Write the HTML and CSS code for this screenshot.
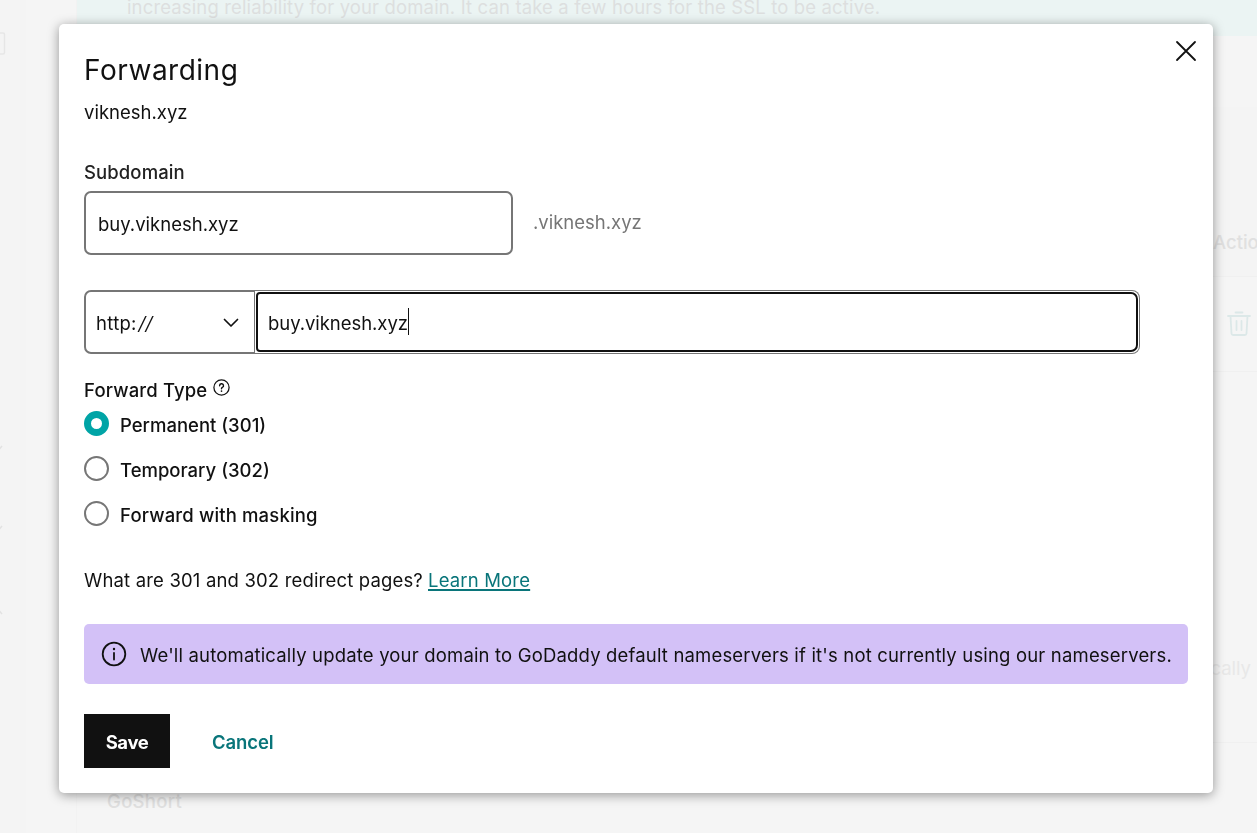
FILE: index.html
```
<!DOCTYPE html>
<html lang="en">
<head>
<meta charset="utf-8">
<title>Forwarding</title>
<link rel="stylesheet" href="styles.css">
</head>
<body>
<div class="page">
  <aside class="rail">
    <svg class="rail-art" width="6" height="833" viewBox="0 0 6 833" fill="none">
      <path d="M0 33H3Q4.500 33 4.500 34.500V52.500Q4.500 54 3 54H0" stroke="#e6e6e6" stroke-width="1.500"/>
      <path d="M-3 446l2.500 3 2.500-3M-3 526l2.500 3 2.500-3M-3 614l2.500-3 2.500 3" stroke="#e2e2e2" stroke-width="1.500"/>
    </svg>
  </aside>
  <main class="content">
    <div class="banner">increasing reliability for your domain. It can take a few hours for the SSL to be active.</div>
    <div class="table-head"><span class="head-label">Actions</span></div>
    <div class="record">
      <svg class="trash" width="24" height="26" viewBox="0 0 24 26" fill="none" stroke="#dce8e8" stroke-width="1.800" stroke-linecap="round" stroke-linejoin="round">
        <path d="M8.500 1.500h7M1 5h22M3.500 5l1 17.500q.100 1.500 1.700 1.500h11.600q1.600 0 1.700-1.500L20.500 5M9.500 10v9M14.500 10v9"/>
      </svg>
    </div>
    <div class="note"><span>automatically</span></div>
    <div class="short">GoShort</div>
  </main>
</div>

<div class="overlay">
  <section class="modal" role="dialog" aria-label="Forwarding">
    <button class="close" aria-label="Close">
      <svg width="22" height="22" viewBox="0 0 22 22" stroke="#111" stroke-width="1.800" stroke-linecap="round"><path d="M2 2l18 18M20 2L2 20"/></svg>
    </button>
    <h1 class="title">Forwarding</h1>
    <p class="domain">viknesh.xyz</p>
    <div class="label">Subdomain</div>
    <div class="sub-row">
      <div class="field">buy.viknesh.xyz</div>
      <span class="suffix">.viknesh.xyz</span>
    </div>
    <div class="url-row">
      <div class="scheme">
        <span>http:<span class="slashes">//</span></span>
        <svg width="16" height="10" viewBox="0 0 16 10" fill="none" stroke="#111" stroke-width="1.700" stroke-linecap="round" stroke-linejoin="round"><path d="M1.500 1.500L8 8l6.500-6.500"/></svg>
      </div>
      <div class="url"><div class="url-focus"><span class="url-text">buy.viknesh.xyz</span><i class="caret"></i></div></div>
    </div>
    <div class="type-label">
      <span class="type-text">Forward Type</span>
      <svg width="17" height="17" viewBox="0 0 17 17" fill="none" stroke="#111" stroke-width="1.250" stroke-linecap="round"><circle cx="8.500" cy="8.500" r="7.600"/><path d="M6.600 6.700a1.950 1.950 0 1 1 2.800 1.700q-.900.500-.900 1.300" stroke-width="1.400"/><path d="M8.500 12v.100" stroke-width="1.700"/></svg>
    </div>
    <div class="radios">
      <div class="radio"><i class="dot on"></i><span>Permanent (301)</span></div>
      <div class="radio"><i class="dot"></i><span>Temporary (302)</span></div>
      <div class="radio"><i class="dot"></i><span class="masking">Forward with masking</span></div>
    </div>
    <p class="help"><span>What are 301 and 302 redirect pages?</span><a class="learn">Learn More</a></p>
    <div class="alert">
      <svg width="26" height="26" viewBox="0 0 26 26" fill="none" stroke="#111" stroke-width="1.800" stroke-linecap="round"><circle cx="13" cy="13" r="11.300"/><path d="M13 12v6.500"/><path d="M13 8v.100" stroke-width="2.400"/></svg>
      <span class="alert-text">We'll automatically update your domain to GoDaddy default nameservers if it's not currently using our nameservers.</span>
    </div>
    <div class="actions">
      <button class="save">Save</button>
      <button class="cancel">Cancel</button>
    </div>
  </section>
</div>
</body>
</html>
```
FILE: styles.css
```
* { box-sizing: border-box; }
body {
  margin: 0;
  height: 833px;
  overflow: hidden;
  font-family: Inter, "Liberation Sans", sans-serif;
  font-size: 18.5px;
  line-height: 26px;
  color: #111;
  background: #f5f5f5;
}
.page { display: flex; height: 833px; color: #e0e0e0; white-space: nowrap; }
.rail { width: 76px; flex: none; background: linear-gradient(90deg, #f4f4f4 26px, #f5f5f5 26px); }
.rail-art { display: block; }
.content { flex: 1; min-width: 0; border-left: 1px solid #f2f2f2; }
.banner { height: 36px; padding: 0 0 0 50px; line-height: 15px; background: #ebf4f3; color: #dddfdf; letter-spacing: 0.14px; }
.table-head { height: 241px; padding: 193px 0 0 1136px; border-bottom: 1px solid #f0f0f0; background: linear-gradient(#f5f5f5 71px, #f4f4f4 71px); }
.head-label { font-weight: 500; }
.record { height: 95px; padding: 34px 0 0 1150px; border-bottom: 1px solid #f0f0f0; }
.trash { display: block; }
.note { height: 371px; padding: 283px 6px 0 0; text-align: right; color: #e8e8e8; border-bottom: 1px solid #f0f0f0; }
.short { padding: 45px 0 0 30px; font-weight: 500; letter-spacing: 0.3px; }

.overlay { position: fixed; inset: 0; padding: 24px 44px 40px 59px; }
.modal {
  position: relative;
  height: 769px;
  padding: 26px 25px 0;
  background: #fff;
  border-radius: 5px;
  box-shadow: 0 2px 12px rgba(0, 0, 0, 0.4);
  white-space: nowrap;
}
.close { position: absolute; top: 16px; right: 16px; padding: 0; border: 0; background: none; }
.close svg { display: block; }
.title { margin: 0; font-size: 28px; line-height: 40px; font-weight: 400; letter-spacing: 0.5px; }
.domain { margin: 9px 0 0; }
.label { margin-top: 34px; font-weight: 500; color: #222; letter-spacing: 0.1px; }
.sub-row { display: flex; align-items: center; gap: 20px; margin-top: 6px; }
.field { width: 429px; height: 64px; padding: 18px 0 0 12px; border: 2px solid #767676; border-radius: 7px; }
.suffix { padding-bottom: 2px; color: #767676; }
.url-row { display: flex; width: 1056px; height: 64px; margin-top: 35px; }
.scheme { display: flex; align-items: center; justify-content: space-between; width: 171px; padding: 2px 15px 0 10px; border: 2px solid #767676; border-right: 1px solid #767676; border-radius: 7px 0 0 7px; letter-spacing: 0.3px; }
.slashes { display: inline-block; transform: skewX(-12deg); margin-left: 2px; }
.url { flex: 1; padding: 1px; border: 1px solid #767676; border-left: 0; border-radius: 0 8px 8px 0; }
.url-focus { display: flex; align-items: center; height: 60px; padding: 2px 0 0 10px; border: 2px solid #111; border-radius: 4px 7px 7px 4px; }
.url-text { letter-spacing: -0.05px; }
.caret { width: 1px; height: 27px; margin-top: -3px; background: #111; }
.type-label { display: flex; align-items: flex-start; gap: 6px; margin-top: 23px; font-weight: 500; }
.type-text { letter-spacing: 0.15px; }
.type-label svg { margin-top: 2px; }
.radios { display: flex; flex-direction: column; gap: 19px; margin-top: 8px; font-weight: 500; }
.radio { display: flex; align-items: center; gap: 11px; height: 26px; }
.radio span { padding-top: 2px; }
.radio .masking { letter-spacing: 0.15px; }
.dot { width: 25px; height: 25px; margin-top: -1px; border: 2px solid #767676; border-radius: 50%; }
.dot.on { border: 7.5px solid #00a4a6; }
.help { display: flex; gap: 5px; margin: 40px 0 0; letter-spacing: 0.17px; }
.learn { color: #09757a; text-decoration: underline; text-decoration-thickness: 2px; text-underline-offset: 2px; }
.alert { display: flex; align-items: center; gap: 13px; width: 1104px; height: 60px; margin-top: 31px; padding-left: 17px; border-radius: 5px; background: #d3c1f7; }
.alert-text { padding-top: 1px; letter-spacing: 0.17px; }
.actions { display: flex; gap: 42px; margin-top: 30px; }
.actions button { height: 54px; padding: 2px 0 0; border: 0; font: 600 18.5px/26px Inter, "Liberation Sans", sans-serif; letter-spacing: -0.1px; }
.actions .save { width: 86px; background: #111; color: #fff; font-weight: 700; letter-spacing: -0.4px; }
.actions .cancel { background: none; color: #09757a; }
```
